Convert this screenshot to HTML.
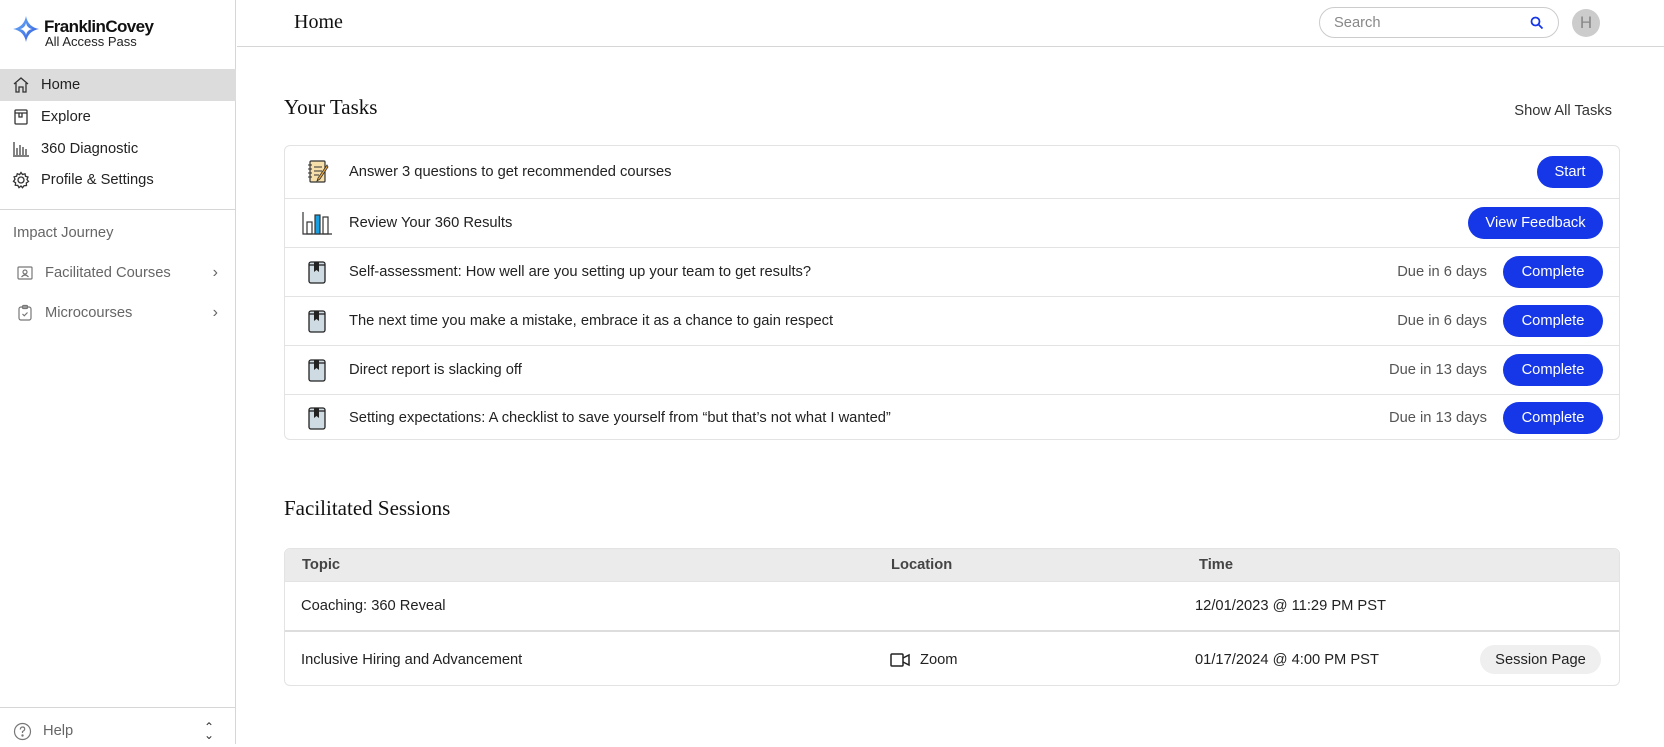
<!DOCTYPE html>
<html><head><meta charset="utf-8"><style>
*{box-sizing:border-box;margin:0;padding:0}
body{width:1664px;height:744px;overflow:hidden;font-family:"Liberation Sans",sans-serif;color:#222;background:#fff;position:relative;font-size:14.7px}
.side{position:absolute;left:0;top:0;width:236px;height:744px;border-right:1px solid #d6d6d6;background:#fff}
.abs{position:absolute}
.nav{position:absolute;left:0;width:236px;height:32px;display:flex;align-items:center;padding-left:12px;font-size:14.7px;color:#222}
.nav svg{margin-right:11px}
.hdr{position:absolute;left:237px;top:0;right:0;height:47px;border-bottom:1px solid #d6d6d6}
.serif{font-family:"Liberation Serif",serif}
.box{position:absolute;left:284px;width:1336px;border:1px solid #e3e3e3;border-radius:6px}
.row{position:absolute;left:0;right:0;display:flex;align-items:center;border-top:1px solid #e3e3e3}
.btn{position:absolute;right:16px;height:32px;border-radius:16px;background:#1537e8;color:#fff;font-size:14.7px;display:flex;align-items:center;justify-content:center}
.due{position:absolute;right:132px;color:#555}
.ic{position:absolute;left:22px}
.txt{position:absolute;left:64px}
</style></head><body>
<div class="side">
 <svg class="abs" style="left:13px;top:16px" width="26" height="26" viewBox="0 0 26 26"><defs><linearGradient id="g" x1="0" y1="0" x2="1" y2="1"><stop offset="0" stop-color="#6fb6f5"/><stop offset="1" stop-color="#2f55e0"/></linearGradient></defs><path d="M13 0 Q15 11 26 13 Q15 15 13 26 Q11 15 0 13 Q11 11 13 0Z" fill="url(#g)"/><path d="M13 7 Q14 12 19 13 Q14 14 13 19 Q12 14 7 13 Q12 12 13 7Z" fill="#fff"/></svg>
 <div class="abs" style="left:44px;top:17px;font-weight:bold;font-size:17px;letter-spacing:-0.6px;color:#111">FranklinCovey</div>
 <div class="abs" style="left:45px;top:34px;font-size:13px;color:#222">All Access Pass</div>
 <div class="nav" style="top:69px;background:#dcdcdc"><svg width="18" height="18" viewBox="0 0 18 18" fill="none" stroke="#333" stroke-width="1.3"><path d="M2 8 L9 2 L16 8 M4 7 V16 H7 V11 H11 V16 H14 V7"/></svg>Home</div>
 <div class="nav" style="top:101px"><svg width="18" height="18" viewBox="0 0 18 18" fill="none" stroke="#333" stroke-width="1.3"><rect x="3" y="2" width="12" height="14" rx="1"/><path d="M3 5 H15 M7 5 V9 H10 V5"/></svg>Explore</div>
 <div class="nav" style="top:133px"><svg width="18" height="18" viewBox="0 0 18 18" fill="none" stroke="#333" stroke-width="1.2"><path d="M1 16 H17 M2 2 V15 M5 8 V15 M8 5 V15 M11 7 V15 M14 9 V15"/></svg>360 Diagnostic</div>
 <div class="nav" style="top:164px"><svg width="18" height="18" viewBox="0 0 18 18" fill="none" stroke="#333" stroke-width="1.3"><circle cx="9" cy="9" r="3"/><path d="M9 1.5 L10.5 3.5 L13 2.8 L13.5 5.3 L16 6 L15 8.5 L16.5 10.5 L14.3 12 L14.5 14.5 L12 14.7 L10.5 16.7 L9 15 L7 16.6 L5.8 14.4 L3.3 14.3 L3.6 11.8 L1.5 10.3 L3 8.3 L2.1 5.8 L4.6 5.2 L5.3 2.7 L7.6 3.6Z"/></svg>Profile &amp; Settings</div>
 <div class="abs" style="left:0;top:209px;width:236px;border-top:1px solid #d6d6d6"></div>
 <div class="abs" style="left:13px;top:225px;color:#666">Impact Journey</div>
 <div class="nav" style="top:257px;color:#666;padding-left:16px"><svg width="18" height="18" viewBox="0 0 18 18" fill="none" stroke="#777" stroke-width="1.2"><rect x="2" y="3" width="14" height="12" rx="1"/><circle cx="9" cy="8" r="2"/><path d="M5.5 13 Q9 9 12.5 13"/></svg>Facilitated Courses<span style="position:absolute;right:18px;font-size:16px">›</span></div>
 <div class="nav" style="top:297px;color:#666;padding-left:16px"><svg width="18" height="18" viewBox="0 0 18 18" fill="none" stroke="#777" stroke-width="1.2"><rect x="3" y="3" width="12" height="13" rx="2"/><rect x="6.5" y="1.5" width="5" height="3" rx="1"/><path d="M6.5 10 L8.3 11.8 L11.5 8.5"/></svg>Microcourses<span style="position:absolute;right:18px;font-size:16px">›</span></div>
 <div class="abs" style="left:0;top:707px;width:236px;border-top:1px solid #d6d6d6"></div>
 <div class="nav" style="top:715px;color:#666;padding-left:13px"><svg width="19" height="19" viewBox="0 0 19 19" fill="none" stroke="#777" stroke-width="1.2"><circle cx="9.5" cy="9.5" r="8"/><path d="M7.3 7.5 Q7.5 5 9.5 5 Q11.7 5 11.7 7 Q11.7 8.5 9.5 9.5 V11"/><circle cx="9.5" cy="13.5" r=".6" fill="#777"/></svg>Help<span style="position:absolute;right:22px;font-size:12px;line-height:8px;text-align:center;color:#333">⌃<br>⌄</span></div>
</div>
<div class="hdr">
 <div class="abs serif" style="left:57px;top:11px;font-size:20px;color:#111">Home</div>
 <div class="abs" style="left:1082px;top:7px;width:240px;height:31px;border:1px solid #ccc;border-radius:16px;color:#888;padding:7px 14px">Search
  <svg style="position:absolute;right:14px;top:8px" width="14" height="14" viewBox="0 0 14 14" fill="none" stroke="#1537e8" stroke-width="1.8"><circle cx="5.5" cy="5.5" r="4"/><path d="M8.5 8.5 L12.5 12.5"/></svg></div>
 <div class="abs" style="left:1335px;top:9px;width:28px;height:28px;border-radius:50%;background:#ccc;color:#888;font-size:17px;text-align:center;line-height:28px">H</div>
</div>
<div class="abs serif" style="left:284px;top:95px;font-size:21px;color:#111">Your Tasks</div>
<div class="abs" style="left:1500px;top:103px;width:112px;text-align:right;color:#333">Show All Tasks</div>
<div class="box" style="top:145px;height:295px">
 <div class="row" style="top:0;height:52px;border-top:none"><svg class="ic" width="22" height="24" viewBox="0 0 22 24"><rect x="3" y="1" width="15" height="21" rx="1" fill="#f6dfa8" stroke="#333" stroke-width="1.2"/><path d="M1 5h4M1 9h4M1 13h4M1 17h4" stroke="#333"/><path d="M7 7h8M7 11h8M7 15h5" stroke="#333"/><path d="M20 5 L11 18 L10 21 L13 19 L21 7Z" fill="#e8a640" stroke="#333" stroke-width=".8"/></svg><span class="txt">Answer 3 questions to get recommended courses</span><div class="btn" style="width:66px">Start</div></div>
 <div class="row" style="top:52px;height:49px"><svg class="ic" style="left:17px" width="30" height="24" viewBox="0 0 30 24" fill="none" stroke="#333" stroke-width="1.2"><path d="M1 1 V23 H30"/><rect x="5" y="11" width="5" height="12"/><rect x="13" y="4" width="5" height="19" fill="#1aa0e0"/><rect x="21" y="6" width="5" height="17"/></svg><span class="txt">Review Your 360 Results</span><div class="btn" style="width:135px">View Feedback</div></div>
 <div class="row" style="top:101px;height:49px"><svg class="ic" width="20" height="24" viewBox="0 0 20 24"><rect x="2" y="2" width="16" height="21" rx="2" fill="#cfdbe3" stroke="#222" stroke-width="1.3"/><path d="M2 5 H18" stroke="#222" stroke-width="1.3"/><path d="M7 2 V12 L9.5 10 L12 12 V2Z" fill="#222"/></svg><span class="txt">Self-assessment: How well are you setting up your team to get results?</span><span class="due">Due in 6 days</span><div class="btn" style="width:100px">Complete</div></div>
 <div class="row" style="top:150px;height:49px"><svg class="ic" width="20" height="24" viewBox="0 0 20 24"><rect x="2" y="2" width="16" height="21" rx="2" fill="#cfdbe3" stroke="#222" stroke-width="1.3"/><path d="M2 5 H18" stroke="#222" stroke-width="1.3"/><path d="M7 2 V12 L9.5 10 L12 12 V2Z" fill="#222"/></svg><span class="txt">The next time you make a mistake, embrace it as a chance to gain respect</span><span class="due">Due in 6 days</span><div class="btn" style="width:100px">Complete</div></div>
 <div class="row" style="top:199px;height:49px"><svg class="ic" width="20" height="24" viewBox="0 0 20 24"><rect x="2" y="2" width="16" height="21" rx="2" fill="#cfdbe3" stroke="#222" stroke-width="1.3"/><path d="M2 5 H18" stroke="#222" stroke-width="1.3"/><path d="M7 2 V12 L9.5 10 L12 12 V2Z" fill="#222"/></svg><span class="txt">Direct report is slacking off</span><span class="due">Due in 13 days</span><div class="btn" style="width:100px">Complete</div></div>
 <div class="row" style="top:248px;height:46px"><svg class="ic" width="20" height="24" viewBox="0 0 20 24"><rect x="2" y="2" width="16" height="21" rx="2" fill="#cfdbe3" stroke="#222" stroke-width="1.3"/><path d="M2 5 H18" stroke="#222" stroke-width="1.3"/><path d="M7 2 V12 L9.5 10 L12 12 V2Z" fill="#222"/></svg><span class="txt">Setting expectations: A checklist to save yourself from “but that’s not what I wanted”</span><span class="due">Due in 13 days</span><div class="btn" style="width:100px">Complete</div></div>
</div>
<div class="abs serif" style="left:284px;top:496px;font-size:21px;color:#111">Facilitated Sessions</div>
<div class="box" style="top:548px;height:138px;overflow:hidden">
 <div class="row" style="top:0;height:32px;border-top:none;background:#ebebeb;font-weight:bold;color:#444"><span class="abs" style="left:17px">Topic</span><span class="abs" style="left:606px">Location</span><span class="abs" style="left:914px">Time</span></div>
 <div class="row" style="top:32px;height:49px"><span class="abs" style="left:16px">Coaching: 360 Reveal</span><span class="abs" style="left:910px">12/01/2023 @ 11:29 PM PST</span></div>
 <div class="row" style="top:81px;height:57px;border-top:2px solid #ddd"><span class="abs" style="left:16px">Inclusive Hiring and Advancement</span>
  <svg class="abs" style="left:605px" width="20" height="14" viewBox="0 0 20 14" fill="none" stroke="#222" stroke-width="1.5"><rect x="1" y="1" width="12" height="12" rx="1"/><path d="M13 5 L19 2 V12 L13 9"/></svg><span class="abs" style="left:635px">Zoom</span>
  <span class="abs" style="left:910px">01/17/2024 @ 4:00 PM PST</span>
  <div class="abs" style="right:18px;width:121px;height:29px;border-radius:15px;background:#efefef;display:flex;align-items:center;justify-content:center">Session Page</div></div>
</div>
</body></html>
